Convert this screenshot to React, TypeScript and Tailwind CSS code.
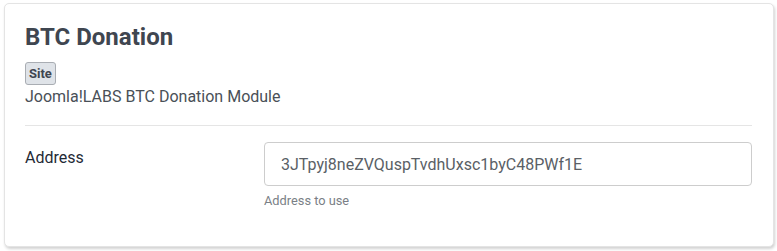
import React from "react";

export default function App() {
  return (
    <div className="min-h-[251px] bg-white pl-[4px] pt-[3px] font-['Roboto',sans-serif]">
      <div className="h-[244px] w-[770px] rounded-[5px] border border-[#e4e4e4] bg-white pt-[19px] pl-[20px] pr-[21px] shadow-[1px_2px_3px_rgba(0,0,0,0.18)]">
        <h2 className="text-[24px] font-bold leading-[29px] text-[#3f4650]">BTC Donation</h2>
        <span className="mt-[10px] inline-block rounded-[3px] border border-[#a9adb3] bg-[#dfe3e8] px-[3px] text-[13px] font-bold leading-[21px] text-[#3f4650]">
          Site
        </span>
        <p className="mt-[2px] text-[16px] leading-[20px] text-[#495057]">Joomla!LABS BTC Donation Module</p>
        <hr className="mt-[18px] border-t border-[#e5e5e5]" />
        <div className="mt-[16px] flex">
          <label className="w-[239px] pt-[6px] text-[16px] leading-[20px] text-[#1f2a36]">Address</label>
          <div className="flex-1">
            <input
              readOnly
              value="3JTpyj8neZVQuspTvdhUxsc1byC48PWf1E"
              className="h-[44px] w-full rounded-[4px] border border-[#cdcdcd] px-[16px] text-[16px] text-[#5a5f66] outline-none"
            />
            <div className="mt-[7px] text-[12.8px] leading-[16px] text-[#7a7f86]">Address to use</div>
          </div>
        </div>
      </div>
    </div>
  );
}
